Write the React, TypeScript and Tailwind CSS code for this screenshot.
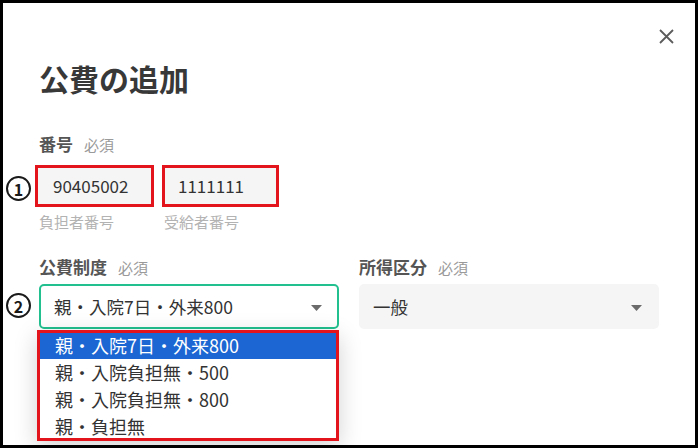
import React from "react";

function Caret() {
  return (
    <svg width="11" height="6" viewBox="0 0 11 6" className="shrink-0">
      <path d="M0 0H11L5.5 6Z" fill="#6b6b6b" />
    </svg>
  );
}

function Circled({ n, className }: { n: string; className: string }) {
  return (
    <div
      className={
        "absolute w-[25px] h-[25px] rounded-full border-[2.5px] border-[#1a1a1a] flex items-center justify-center text-[16px] leading-none font-bold text-[#1a1a1a] " +
        className
      }
    >
      {n}
    </div>
  );
}

export default function App() {
  const items = [
    "親・入院7日・外来800",
    "親・入院負担無・500",
    "親・入院負担無・800",
    "親・負担無",
  ];
  return (
    <div className="w-[698px] h-[448px] border-[3px] border-black bg-white relative overflow-hidden font-['Noto_Sans_CJK_JP','Noto_Sans',sans-serif] text-[#333]">
      <div className="flex justify-end pr-[21px] pt-[26px]">
        <svg width="15" height="15" viewBox="0 0 15 15">
          <path d="M1 1L14 14M14 1L1 14" stroke="#5c5c5c" strokeWidth="1.8" />
        </svg>
      </div>
      <div className="pl-[36px]">
        <h1 className="mt-[14px] text-[30px] leading-[40px] font-bold text-[#383838]">
          公費の追加
        </h1>

        <div className="mt-[34px] flex items-baseline h-[24px] leading-[24px]">
          <span className="text-[17px] font-bold text-[#555]">番号</span>
          <span className="ml-[11px] text-[15px] text-[#9a9a9a]">必須</span>
        </div>

        <div className="mt-[9px] flex gap-[8px]">
          <div className="flex flex-col">
            <div className="-ml-[4px] w-[119px] h-[42px] border-[3px] border-[#e3141c] bg-[#f5f5f5] flex items-center pl-[15px] text-[17px] text-[#333]">
              90405002
            </div>
            <div className="mt-[5px] h-[20px] leading-[20px] text-[15px] text-[#b3b3b3]">
              負担者番号
            </div>
          </div>
          <div className="flex flex-col">
            <div className="w-[117px] h-[42px] border-[3px] border-[#e3141c] bg-[#f5f5f5] flex items-center pl-[13px] text-[17px] text-[#333]">
              1111111
            </div>
            <div className="mt-[5px] ml-[2px] h-[20px] leading-[20px] text-[15px] text-[#b3b3b3]">
              受給者番号
            </div>
          </div>
        </div>

        <div className="mt-[23px] grid grid-cols-[300px_300px] gap-x-[20px]">
          <div className="flex items-baseline h-[24px] leading-[24px]">
            <span className="text-[17px] font-bold text-[#555]">公費制度</span>
            <span className="ml-[11px] text-[15px] text-[#9a9a9a]">必須</span>
          </div>
          <div className="flex items-baseline h-[24px] leading-[24px]">
            <span className="text-[17px] font-bold text-[#555]">所得区分</span>
            <span className="ml-[11px] text-[15px] text-[#9a9a9a]">必須</span>
          </div>

          <div className="relative mt-[5px]">
            <div className="h-[45px] border-2 border-[#22c08f] rounded-[5px] bg-white flex items-center pl-[13px] pr-[15px] pt-[2px]">
              <span className="flex-1 text-[17.5px] text-[#333]">親・入院7日・外来800</span>
              <Caret />
            </div>
            <div className="absolute left-[-2px] top-[46px] w-[302px] h-[111px] border-[3px] border-[#e3141c] bg-white overflow-hidden shadow-[0_6px_22px_rgba(0,0,0,0.18)]">
              <div className="-mt-[1px] flex flex-col">
                {items.map((t, i) => (
                  <div
                    key={t}
                    className={
                      "h-[27px] flex items-center pl-[15px] text-[18px] " +
                      (i === 0 ? "bg-[#1b66d2] text-white" : "text-[#333]")
                    }
                  >
                    {t}
                  </div>
                ))}
              </div>
            </div>
          </div>
          <div className="mt-[5px]">
            <div className="h-[45px] rounded-[5px] bg-[#f5f5f5] flex items-center pl-[14px] pr-[17px] pt-[2px]">
              <span className="flex-1 text-[17.5px] text-[#333]">一般</span>
              <Caret />
            </div>
          </div>
        </div>
      </div>

      <Circled n="1" className="left-[3px] top-[173px]" />
      <Circled n="2" className="left-[3px] top-[290px]" />
    </div>
  );
}
